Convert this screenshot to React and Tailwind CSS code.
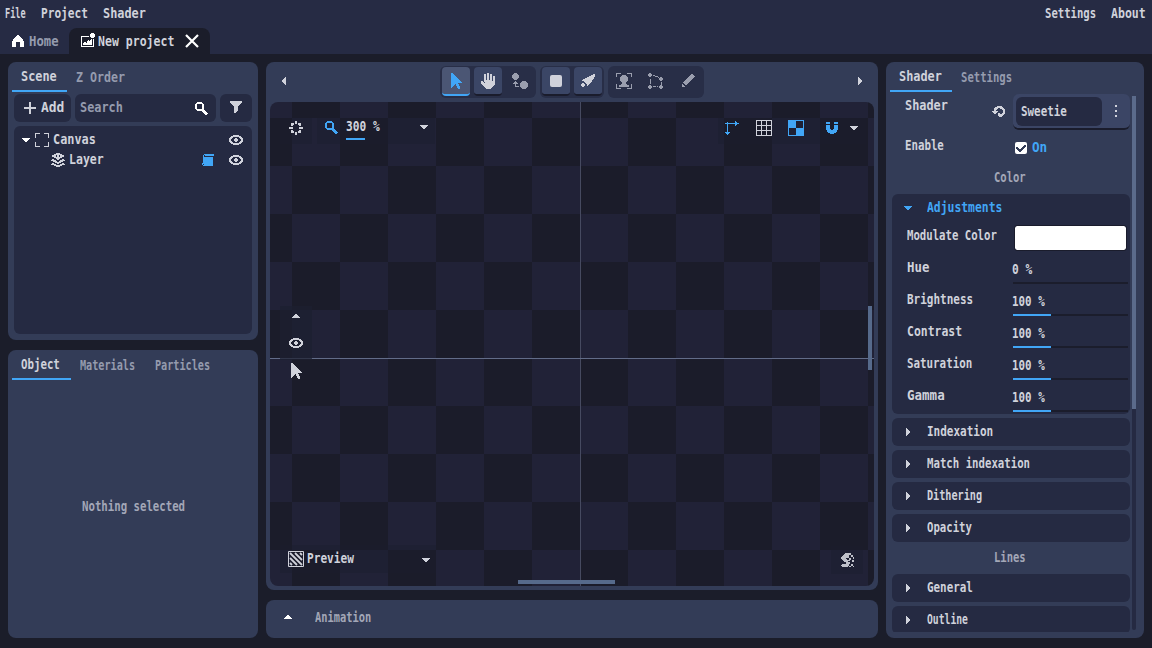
import React, { useLayoutEffect, useRef, useState } from 'react';
import clsx from 'clsx';

// Narrows the mono font so that a label is as wide as in the pixel font
const Text = ({ w, className, children }) => {
  const ref = useRef(null);
  const [scale, setScale] = useState(1);

  useLayoutEffect(() => {
    setScale((w + 1) / ref.current.offsetWidth);
  }, [w, children]);

  return (
    <span className={clsx('block shrink-0 whitespace-pre', className)} style={{ width: w }}>
      <span
        ref={ref}
        className="inline-block origin-left whitespace-pre"
        style={{ transform: `scaleX(${scale})` }}
      >
        {children}
      </span>
    </span>
  );
};

// Pixel icon, one character per pixel
const Pixels = ({ rows, className }) => {
  let d = '';
  rows.forEach((row, y) => {
    [...row].forEach((c, x) => {
      if (c === '#') d += `M${x} ${y}h1v1h-1z`;
    });
  });
  return (
    <svg
      className={clsx('block shrink-0', className)}
      width={rows[0].length}
      height={rows.length}
      viewBox={`0 0 ${rows[0].length} ${rows.length}`}
      shapeRendering="crispEdges"
      fill="currentColor"
    >
      <path d={d} />
    </svg>
  );
};

const ICONS = {
  home: [
    '.....##.....',
    '....####....',
    '...######...',
    '..########..',
    '.##########.',
    '.##########.',
    '############',
    '####....####',
    '####....####',
    '####....####',
    '####....####',
    '####....####',
  ],
  image: [
    '..........###.',
    '.........#####',
    '.........#####',
    '########.#####',
    '#.........###.',
    '#.............',
    '#.........#.#.',
    '#......#.##.#.',
    '#.....#####.#.',
    '#..##.#####.#.',
    '#.#########.#.',
    '#.#########.#.',
    '#...........#.',
    '#############.',
  ],
  search: [
    '..#####......',
    '.#######.....',
    '##.....##....',
    '##.....##....',
    '##.....##....',
    '##.....##....',
    '##.....##....',
    '.########....',
    '..########...',
    '.......####..',
    '........####.',
    '.........####',
    '..........##.',
  ],
  filter: [
    '############',
    '############',
    '.##########.',
    '..########..',
    '...######...',
    '....####....',
    '....####....',
    '....####....',
    '....####....',
    '....####....',
    '....###.....',
    '....##......',
  ],
  eye: [
    '....######....',
    '..##########..',
    '.###......###.',
    '###...##...###',
    '##...####...##',
    '##...####...##',
    '###...##...###',
    '.###......###.',
    '..##########..',
    '....######....',
  ],
  canvas: [
    '#####....#####',
    '#............#',
    '#............#',
    '#............#',
    '#............#',
    '..............',
    '..............',
    '..............',
    '..............',
    '#............#',
    '#............#',
    '#............#',
    '#............#',
    '#####....#####',
  ],
  layers: [
    '.....####.....',
    '...########...',
    '.####.##.####.',
    '.####.##.####.',
    '...########...',
    '.....####.....',
    '.##...##...##.',
    '#####....#####',
    '..####..####..',
    '....######....',
    '.##...##...##.',
    '#####....#####',
    '...########...',
    '.....####.....',
  ],
  scroll: [
    '..##########',
    '.#.#########',
    '.#..........',
    '.##########.',
    '.##########.',
    '.##########.',
    '.##########.',
    '.##########.',
    '.##########.',
    '###########.',
    '#.#########.',
    '.##########.',
  ],
  down: ['########', '.######.', '..####..', '...##...'],
  up: ['...##...', '..####..', '.######.', '########'],
  right: ['#...', '##..', '###.', '####', '####', '###.', '##..', '#...'],
  left: ['...#', '..##', '.###', '####', '####', '.###', '..##', '...#'],
  pointer: [
    '##.........',
    '###........',
    '####.......',
    '#####......',
    '######.....',
    '#######....',
    '########...',
    '#########..',
    '##########.',
    '###########',
    '#######....',
    '####.###...',
    '###..###...',
    '##....###..',
    '#.....###..',
    '.......##..',
  ],
  hand: [
    '......##.......',
    '...##.##.##....',
    '...##.##.##....',
    '...##.##.##.##.',
    '...##.##.##.##.',
    '...##.##.##.##.',
    '...##.##.##.##.',
    '...########.##.',
    '##.###########.',
    '###.##########.',
    '##############.',
    '.#############.',
    '..###########..',
    '...#########...',
    '....#######....',
    '.....#####.....',
  ],
  swap: [
    '..###...........',
    '.#####..........',
    '#######.........',
    '#######.........',
    '#######.........',
    '.#####..........',
    '..###...........',
    '................',
    '...#......####..',
    '..###....######.',
    '.#####..########',
    '...#....########',
    '...#....########',
    '...####.########',
    '.........######.',
    '..........####..',
  ],
  brush: [
    '............##',
    '..........####',
    '........######',
    '......#######.',
    '....#########.',
    '..##########..',
    '.##########...',
    '...########...',
    '....######....',
    '.##..####.....',
    '####..##......',
    '####..#.......',
    '.##...........',
  ],
  person: [
    '#####......#####',
    '#..............#',
    '#.....####.....#',
    '#....######....#',
    '....########....',
    '....########....',
    '....########....',
    '....########....',
    '.....######.....',
    '......####......',
    '......####......',
    '#....######....#',
    '#..##########..#',
    '#..##########..#',
    '#..............#',
    '#####......#####',
  ],
  points: [
    '.##.............',
    '####............',
    '####.##.........',
    '.##....###......',
    '..........#.##..',
    '...........####.',
    '..#........####.',
    '..#.........##..',
    '..#.............',
    '..#..........#..',
    '..#..........#..',
    '.............#..',
    '.##.........##..',
    '####.###.#.####.',
    '####.......####.',
    '.##.........##..',
  ],
  pencil: [
    '.........##..',
    '........####.',
    '.......######',
    '......######.',
    '.....######..',
    '....######...',
    '...######....',
    '..######.....',
    '.######......',
    '..####.......',
    '#..##........',
    '##...........',
    '###..........',
  ],
  center: [
    '......##......',
    '......##......',
    '..###.##.###..',
    '..###....###..',
    '..##......##..',
    '..............',
    '####......####',
    '####......####',
    '..............',
    '..##......##..',
    '..###....###..',
    '..###.##.###..',
    '......##......',
    '......##......',
  ],
  axes: [
    '..........#...',
    '..#.......##..',
    '##############',
    '..#.......##..',
    '..#.......#...',
    '..#...........',
    '..#...........',
    '..#...........',
    '..#...........',
    '..#...........',
    '..#...........',
    '#####.........',
    '.###..........',
    '..#...........',
  ],
  magnet: [
    '####....####',
    '####....####',
    '............',
    '####....####',
    '####....####',
    '####....####',
    '####....####',
    '#####..#####',
    '.##########.',
    '.##########.',
    '..########..',
    '....####....',
  ],
  undo: [
    '.....#####....',
    '...########...',
    '..####..####..',
    '..###.....###.',
    '..##.......##.',
    '######.....##.',
    '.####......##.',
    '..##..##..###.',
    '......######..',
    '......#####...',
    '.......###....',
  ],
  check: [
    '........##',
    '.......###',
    '##....###.',
    '###..###..',
    '.######...',
    '..####....',
    '...##.....',
  ],
  head: [
    '....######...',
    '...#######...',
    '..######..##.',
    '.#######..##.',
    '########....#',
    '#####...##..#',
    '.#####..##...',
    '..#######..##',
    '...####....##',
    '.....####....',
    '.....####....',
    '.#######..##.',
    '########..##.',
    '.######.##..#',
  ],
};

const adjustments = [
  { name: 'Hue', w: 21, value: '0 %', vw: 19, filled: false },
  { name: 'Brightness', w: 65, value: '100 %', vw: 32, filled: true },
  { name: 'Contrast', w: 54, value: '100 %', vw: 32, filled: true },
  { name: 'Saturation', w: 64, value: '100 %', vw: 32, filled: true },
  { name: 'Gamma', w: 37, value: '100 %', vw: 32, filled: true },
];

const Tab = ({ active, w, children, className }) => (
  <div
    className={clsx(
      'flex h-[30px] shrink-0 items-center border-b-2',
      active ? 'border-[#41a6f6]' : 'border-transparent pt-0.5 text-[#959bae]',
      className
    )}
  >
    <Text w={w}>{children}</Text>
  </div>
);

const ToolGroup = ({ children, className }) => (
  <div className={clsx('flex h-8 gap-1 rounded-md bg-[#282e47] px-0.5 pt-px', className)}>{children}</div>
);

const Tool = ({ icon, variant, children }) => (
  <div
    className={clsx(
      'flex h-[29px] w-7 items-center justify-center rounded',
      variant === 'active' && 'border-b-2 border-[#41a6f6] bg-[#4b5674] text-[#41a6f6]',
      variant === 'normal' && 'border-b-2 border-[#1a1c2c] bg-[#3b4666]',
      variant === 'off' && 'pb-0.5 text-[#9a9eae]'
    )}
  >
    {icon ? <Pixels rows={ICONS[icon]} /> : children}
  </div>
);

const Fold = ({ w, children, className }) => (
  <div className={clsx('flex h-7 shrink-0 items-center rounded-md bg-[#252a42] pl-3.5', className)}>
    <Pixels rows={ICONS.right} />
    <Text w={w} className="-mt-0.5 ml-[17px]">{children}</Text>
  </div>
);

const MenuBar = () => (
  <header className="h-[54px] bg-[#262b44]">
    <div className="flex h-7 items-center pb-0.5 pl-[5px] pr-[7px]">
      <Text w={20}>File</Text>
      <Text w={46} className="ml-4">Project</Text>
      <Text w={42} className="ml-4">Shader</Text>
      <div className="grow" />
      <Text w={50}>Settings</Text>
      <Text w={34} className="ml-4">About</Text>
    </div>
    <div className="flex h-[26px]">
      <div className="flex w-[69px] items-center pl-3">
        <Pixels rows={ICONS.home} className="text-white" />
        <Text w={29} className="-mt-px ml-[5px] text-[#959bae]">Home</Text>
      </div>
      <div className="flex w-[141px] items-center rounded-t-lg bg-[#1b1d2a] pl-3">
        <Pixels rows={ICONS.image} className="mb-0.5 text-white" />
        <Text w={75} className="-mt-px ml-[3px]">New project</Text>
        <svg className="ml-3 block" width="14" height="14" viewBox="0 0 14 14" stroke="#fff" strokeWidth="2.2">
          <path d="M1 1l12 12M13 1L1 13" />
        </svg>
      </div>
    </div>
  </header>
);

const ScenePanel = () => (
  <section className="h-[278px] rounded-lg bg-[#333c57] px-1">
    <div className="flex">
      <Tab active w={35} className="pl-[9px] pr-[11px]">Scene</Tab>
      <Tab w={48} className="pl-[9px]">Z Order</Tab>
    </div>
    <div className="mt-0.5 flex h-7 gap-1 px-0.5">
      <div className="flex w-[57px] items-center rounded-md bg-[#252a42] pl-2.5">
        <svg className="block" width="12" height="12" viewBox="0 0 12 12" fill="currentColor">
          <path d="M5 0h2v5h5v2H7v5H5V7H0V5h5z" />
        </svg>
        <Text w={22} className="ml-[5px] -mt-0.5">Add</Text>
      </div>
      <div className="flex w-[141px] items-center justify-between rounded-md bg-[#252a42] pl-[5px] pr-2">
        <Text w={42} className="-mt-0.5 text-[#959bae]">Search</Text>
        <Pixels rows={ICONS.search} className="text-white" />
      </div>
      <div className="flex w-8 items-center justify-center rounded-md bg-[#252a42]">
        <Pixels rows={ICONS.filter} className="-mt-0.5" />
      </div>
    </div>
    <div className="mx-0.5 mt-1 h-[208px] rounded-md bg-[#252a42] pt-1 pr-[9px]">
      <div className="flex h-5 items-center pl-2">
        <Pixels rows={ICONS.down} className="text-white" />
        <Pixels rows={ICONS.canvas} className="ml-[5px]" />
        <Text w={42} className="-mt-0.5 ml-1">Canvas</Text>
        <Pixels rows={ICONS.eye} className="ml-auto" />
      </div>
      <div className="flex h-5 items-center pl-[37px]">
        <Pixels rows={ICONS.layers} />
        <Text w={34} className="-mt-0.5 ml-1">Layer</Text>
        <Pixels rows={ICONS.scroll} className="ml-auto text-[#41a6f6]" />
        <Pixels rows={ICONS.eye} className="ml-[15px]" />
      </div>
    </div>
  </section>
);

const ObjectPanel = () => (
  <section className="mt-2.5 h-[288px] rounded-lg bg-[#333c57] px-1">
    <div className="flex">
      <Tab active w={38} className="pl-[9px] pr-3">Object</Tab>
      <Tab w={54} className="pl-[9px]">Materials</Tab>
      <Tab w={54} className="pl-[21px]">Particles</Tab>
    </div>
    <div className="flex justify-center pr-px pt-[117px] text-[#a3a7b7]">
      <Text w={102}>Nothing selected</Text>
    </div>
  </section>
);

const Canvas = () => (
  <div className="relative mx-1 h-[484px] overflow-hidden rounded-lg bg-[conic-gradient(#1b1c2a_25%,#212237_0_50%,#1b1c2a_0_75%,#212237_0)] bg-[length:96px_96px] bg-[position:22px_16px]">
    {/* axes of the scene */}
    <div className="absolute left-[310px] top-0 h-full w-px bg-[#464a60]" />
    <div className="absolute left-0 top-64 h-px w-full bg-[#626c88]" />

    <div className="absolute left-2.5 top-4 flex h-[26px] w-8 justify-center bg-[#1b1d2c]/40 pt-[3px]">
      <Pixels rows={ICONS.center} />
    </div>
    <div className="absolute left-[47px] top-4 flex h-[26px] w-[118px] bg-[#1b1d2c]/40 pl-2 pt-[3px]">
      <Pixels rows={ICONS.search} className="text-[#41a6f6]" />
      <div className="-mt-1 ml-2 w-[65px]">
        <Text w={33}>300 %</Text>
        <div className="mt-[3px] h-0.5 w-[19px] bg-[#41a6f6]" />
      </div>
      <Pixels rows={ICONS.down} className="ml-[9px] mt-1" />
    </div>

    <div className="absolute left-[448px] top-4 flex h-[26px] w-[148px] bg-[#1b1d2c]/40 pl-[7px] pt-0.5 text-[#41a6f6]">
      <Pixels rows={ICONS.axes} className="mt-px" />
      <svg className="ml-[17px] block text-[#d0d2db]" width="16" height="16" fill="none" stroke="currentColor" shapeRendering="crispEdges">
        <path d="M.5 .5h15v15H.5zM5.5 0v16M10.5 0v16M0 5.5h16M0 10.5h16" />
      </svg>
      <svg className="ml-4 block" width="16" height="16" shapeRendering="crispEdges">
        <path d="M0 0h8v8H0zM8 8h8v8H8z" fill="currentColor" />
        <path d="M.5 .5h15v15H.5z" fill="none" stroke="currentColor" />
      </svg>
      <Pixels rows={ICONS.magnet} className="ml-[22px] mt-0.5" />
      <Pixels rows={ICONS.down} className="ml-3 mt-1.5 text-[#d0d2db]" />
    </div>

    <div className="absolute left-2.5 top-[204px] flex h-[54px] w-8 flex-col items-center bg-[#1d1f30]/70 pt-2">
      <Pixels rows={ICONS.up} />
      <Pixels rows={ICONS.eye} className="mt-5" />
    </div>
    <Pixels rows={ICONS.pointer} className="absolute left-[21px] top-[261px]" />

    <div className="absolute bottom-[13px] left-2.5 flex h-7 w-[156px] items-center bg-[#1b1d2c]/40 pl-2">
      <svg className="block" width="16" height="16" fill="none" stroke="currentColor">
        <path d="M.5 .5h15v15H.5z" />
        <path d="M2 12l2 2M2 7l7 7M2 2l12 12M7 2l7 7M12 2l2 2" strokeWidth="1.8" />
      </svg>
      <Text w={46} className="-mt-0.5 ml-[3px]">Preview</Text>
      <Pixels rows={ICONS.down} className="ml-[69px] mt-0.5" />
    </div>
    <div className="absolute bottom-3 right-[11px] flex h-7 w-8 items-center justify-center bg-[#1b1d2c]/40">
      <Pixels rows={ICONS.head} className="text-[#bfc1ca]" />
    </div>

    {/* scrollbars */}
    <div className="absolute bottom-0.5 left-[248px] h-1 w-[97px] bg-[#566a8b]" />
    <div className="absolute right-0.5 top-[204px] h-16 w-1 bg-[#566a8b]" />
  </div>
);

const Workspace = () => (
  <main className="w-[612px]">
    <section className="h-[528px] rounded-lg bg-[#333c57]">
      <div className="flex h-10 items-start pt-1">
        <Pixels rows={ICONS.left} className="ml-4 mt-[11px]" />
        <ToolGroup className="ml-[154px] w-24">
          <Tool icon="pointer" variant="active" />
          <Tool icon="hand" variant="normal" />
          <Tool icon="swap" variant="off" />
        </ToolGroup>
        <ToolGroup className="ml-1 w-16">
          <Tool variant="normal">
            <div className="h-3 w-3 rounded-xs bg-[#d0d2db]" />
          </Tool>
          <Tool icon="brush" variant="normal" />
        </ToolGroup>
        <ToolGroup className="ml-1 w-24">
          <Tool icon="person" variant="off" />
          <Tool icon="points" variant="off" />
          <Tool icon="pencil" variant="off" />
        </ToolGroup>
        <Pixels rows={ICONS.right} className="ml-[154px] mt-[11px]" />
      </div>
      <Canvas />
    </section>
    <section className="mt-2.5 flex h-[38px] items-center rounded-lg bg-[#333c57] pb-1 pl-[18px]">
      <Pixels rows={ICONS.up} className="text-white" />
      <Text w={55} className="-mt-px ml-[23px] text-[#a3a7b7]">Animation</Text>
    </section>
  </main>
);

const ShaderPanel = () => (
  <aside className="h-[576px] w-[258px] rounded-lg bg-[#333c57] px-1">
    <div className="flex">
      <Tab active w={42} className="pl-[9px] pr-[11px]">Shader</Tab>
      <Tab w={50} className="pl-[9px]">Settings</Tab>
    </div>
    <div className="mt-0.5 flex pl-0.5">
      <div className="flex h-[538px] w-[238px] flex-col overflow-hidden">
        <div className="flex h-9 shrink-0">
          <Text w={42} className="ml-[13px] mt-0.5">Shader</Text>
          <Pixels rows={ICONS.undo} className="ml-[45px] mt-3" />
          <div className="ml-[7px] flex h-9 w-[117px] rounded-md border-b-2 border-[#1a1c2c] bg-[#3b4565] pl-[3px] pt-[3px]">
            <div className="flex h-[29px] w-[86px] items-center rounded-md bg-[#252a42] pl-[5px]">
              <Text w={45} className="-mt-0.5">Sweetie</Text>
            </div>
            <div className="ml-[13px] mt-2 flex flex-col gap-[3px]">
              <div className="h-0.5 w-0.5 bg-[#d0d2db]" />
              <div className="h-0.5 w-0.5 bg-[#d0d2db]" />
              <div className="h-0.5 w-0.5 bg-[#d0d2db]" />
            </div>
          </div>
        </div>
        <div className="flex h-[37px] shrink-0 pt-1.5">
          <Text w={38} className="ml-[13px]">Enable</Text>
          <div className="ml-[72px] mt-1.5 flex h-3 w-3 items-center justify-center rounded-xs bg-white text-[#333c57]">
            <Pixels rows={ICONS.check} />
          </div>
          <Text w={14} className="ml-[5px] mt-0.5 text-[#41a6f6]">On</Text>
        </div>
        <div className="flex h-[27px] shrink-0 justify-center pr-1 text-[#a3a7b7]">
          <Text w={31} className="mt-px">Color</Text>
        </div>
        <div className="h-[220px] shrink-0 rounded-md bg-[#252a42]">
          <div className="flex h-7 items-center pl-3 text-[#41a6f6]">
            <Pixels rows={ICONS.down} />
            <Text w={74} className="-mt-0.5 ml-[15px]">Adjustments</Text>
          </div>
          <div className="flex h-8">
            <Text w={89} className="ml-[15px] mt-1">Modulate Color</Text>
            <div className="ml-[19px] mt-1 h-6 w-[111px] rounded-xs bg-white outline outline-[#1a1c2c]" />
          </div>
          {adjustments.map((a) => (
            <div key={a.name} className="flex h-8">
              <Text w={a.w} className="ml-[15px] mt-1">{a.name}</Text>
              <div className="ml-auto mr-0.5 w-[115px] pt-1.5">
                <Text w={a.vw} className="-ml-px">{a.value}</Text>
                <div className="mt-1 h-0.5 bg-[#1b1d2c]">
                  {a.filled && <div className="h-0.5 w-[38px] bg-[#41a6f6]" />}
                </div>
              </div>
            </div>
          ))}
        </div>
        <div className="mt-1 flex shrink-0 flex-col gap-1">
          <Fold w={65}>Indexation</Fold>
          <Fold w={102}>Match indexation</Fold>
          <Fold w={54}>Dithering</Fold>
          <Fold w={44}>Opacity</Fold>
        </div>
        <div className="flex h-8 shrink-0 justify-center pr-1 pt-1.5 text-[#a3a7b7]">
          <Text w={31}>Lines</Text>
        </div>
        <Fold w={45}>General</Fold>
        <Fold w={40} className="mt-1">Outline</Fold>
      </div>
      <div className="ml-0.5 mt-0.5 h-[534px] w-1 rounded-full bg-[#252a42]">
        <div className="h-[313px] bg-[#5b6b8b]" />
      </div>
    </div>
  </aside>
);

const App = () => {
  return (
    <div className="h-[648px] w-[1152px] overflow-hidden bg-[#1b1d2a] font-['DejaVu_Sans_Mono',monospace] text-[13.5px] font-bold leading-[18px] text-[#d0d2db]">
      <MenuBar />
      <div className="flex gap-2 px-2 pt-2">
        <div className="w-[250px]">
          <ScenePanel />
          <ObjectPanel />
        </div>
        <Workspace />
        <ShaderPanel />
      </div>
    </div>
  );
};

export default App;
